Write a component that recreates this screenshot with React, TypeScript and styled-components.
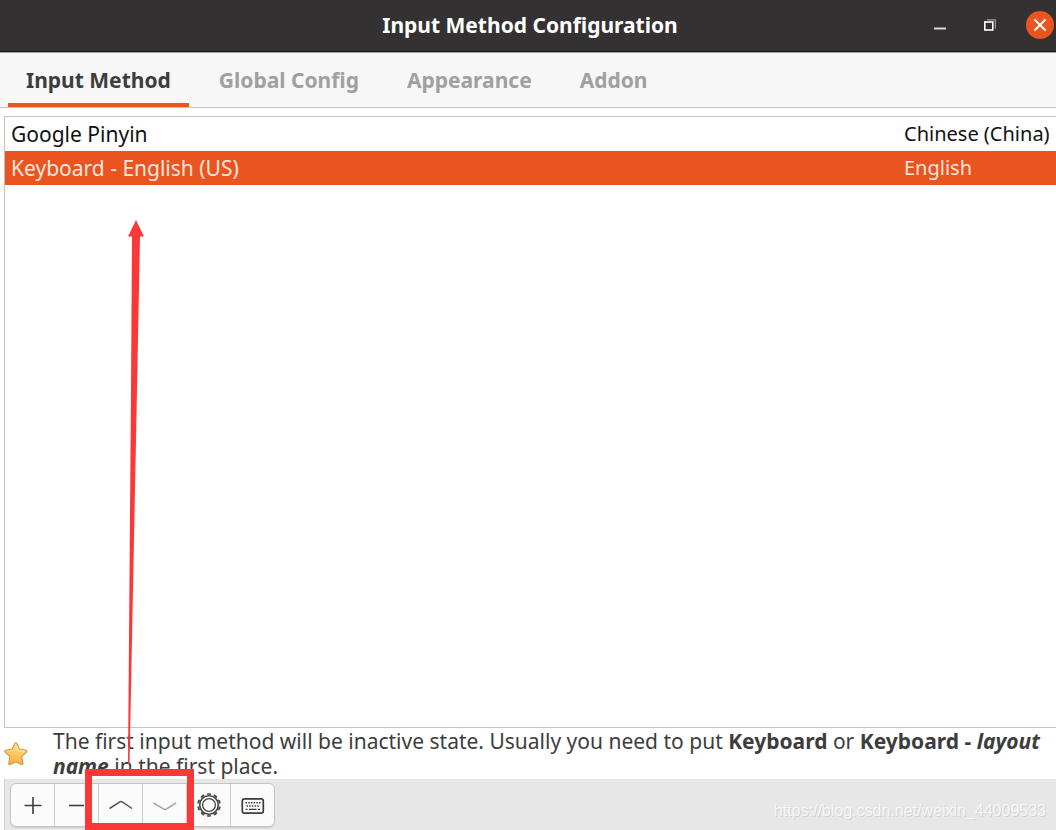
import React, { useState } from "react";
import styled, { createGlobalStyle } from "styled-components";

const GlobalStyle = createGlobalStyle`
  *, *::before, *::after { box-sizing: border-box; }
  body {
    margin: 0;
    background: #ffffff;
    color: #3d3d3d;
    font-family: "Noto Sans", "Open Sans", sans-serif;
    font-size: 21px;
  }
  button { font: inherit; color: inherit; }
`;

const Window = styled.div`
  position: relative;
  display: flex;
  flex-direction: column;
  min-height: 100vh;
  overflow: hidden;
`;

const TitleBar = styled.header`
  display: grid;
  grid-template-columns: 1fr auto 1fr;
  align-items: center;
  height: 52px;
  background: #333132;
  border-bottom: 1px solid #1f1e1e;
`;

const Title = styled.h1`
  grid-column: 2;
  margin: 0;
  padding: 0 0 2px 4px;
  color: #ffffff;
  font-size: 21px;
  line-height: 28px;
`;

const WindowControls = styled.div`
  display: flex;
  justify-content: flex-end;
  align-items: center;
  gap: 22px;
  padding: 0 2px 2px 0;
`;

const WindowButton = styled.button<{ $close?: boolean }>`
  display: grid;
  place-items: center;
  width: 28px;
  height: 28px;
  padding: 0;
  border: 0;
  border-radius: 50%;
  background: ${(p) => (p.$close ? "#e95420" : "transparent")};
`;

const TabBar = styled.div`
  display: flex;
  gap: 12px;
  height: 56px;
  padding-left: 8px;
  background: #f7f7f7;
  border-top: 1px solid #a3a2a2;
  border-bottom: 1px solid #c4c4c4;
`;

const Tab = styled.button<{ $active: boolean }>`
  padding: 4px 18px 0;
  border: 0;
  border-bottom: 4px solid ${(p) => (p.$active ? "#e95420" : "transparent")};
  background: transparent;
  color: ${(p) => (p.$active ? "#3d3d3d" : "#a0a0a0")};
  font-size: 21px;
  font-weight: 700;
  line-height: 28px;
  white-space: nowrap;
`;

const ListFrame = styled.main`
  flex: 1;
  margin: 8px 0 0 4px;
  border: 1px solid #c4c4c4;
  border-right: 0;
`;

const MethodTable = styled.table`
  width: 100%;
  border-collapse: collapse;
`;

const MethodRow = styled.tr<{ $selected: boolean }>`
  height: 34px;
  background: ${(p) => (p.$selected ? "#e95420" : "#ffffff")};
  color: ${(p) => (p.$selected ? "#ffe6dc" : "#111111")};
`;

const MethodCell = styled.td<{ $language?: boolean }>`
  width: ${(p) => (p.$language ? "158px" : "auto")};
  padding: 0 6px;
  font-size: ${(p) => (p.$language ? "20px" : "21px")};
  line-height: 34px;
  white-space: nowrap;
`;

const Hint = styled.section`
  display: flex;
  align-items: center;
  gap: 25px;
  height: 51px;
  padding: 0 4px;
`;

const HintText = styled.p`
  flex: 1;
  margin: 0;
  font-size: 21px;
  line-height: 25px;
`;

const Toolbar = styled.footer`
  display: flex;
  align-items: flex-start;
  justify-content: space-between;
  height: 51px;
  margin-left: 4px;
  padding: 4px 10px 0 5px;
  background: #e7e7e7;
  border-left: 1px solid #d0d0d0;
`;

const ButtonGroup = styled.div`
  display: flex;
  border: 1px solid #c4c4c4;
  border-radius: 6px;
  background: #fbfbfb;
  box-shadow: 0 1px 1px #cfcfcf;
`;

const ToolButton = styled.button`
  display: grid;
  place-items: center;
  width: 43px;
  height: 42px;
  padding: 0;
  border: 0;
  background: transparent;
  & + & { width: 44px; border-left: 1px solid #cccccc; }
`;

const Watermark = styled.span`
  padding-top: 16px;
  color: #f6f6f6;
  font-family: "Liberation Sans", Arial, sans-serif;
  font-size: 16px;
  line-height: 24px;
  text-shadow: 1px 1px 0 #d2d2d2;
`;

const Annotation = styled.svg`
  position: absolute;
  left: 0;
  bottom: 0;
  pointer-events: none;
`;

const tabs = ["Input Method", "Global Config", "Appearance", "Addon"];

const methods = [
  { name: "Google Pinyin", language: "Chinese (China)" },
  { name: "Keyboard - English (US)", language: "English" },
];

const StarIcon = () => (
  <svg width="24" height="26" viewBox="0 0 24 26" aria-hidden="true">
    <defs>
      <linearGradient id="star" x1="0" y1="0" x2="0" y2="1">
        <stop offset="0" stopColor="#ffe39a" />
        <stop offset="0.55" stopColor="#fcc65a" />
        <stop offset="1" stopColor="#fbae42" />
      </linearGradient>
    </defs>
    <path
      d="M11.8 1.8Q12.6 1.8 13 2.8L15.4 8 22 9.2Q23.6 9.8 22.4 11L17.8 15.4 18.9 22.4Q18.8 24 17.2 23.4L11.8 20.8 6.4 23.5Q4.6 24 4.8 22.4L5.8 15.4 1.1 11Q0.2 9.6 1.7 9.2L8.2 8 10.6 2.8Q11 1.8 11.8 1.8Z"
      fill="url(#star)"
      stroke="#cf9748"
      strokeWidth="1.1"
      strokeLinejoin="round"
    />
    <path d="M11.8 4.5 14.4 9.4 20 10.4 16.4 14.6" fill="none" stroke="#fff0b8" strokeWidth="1" />
  </svg>
);

const teeth = Array.from({ length: 10 }, (_, i) => i * 36);

const icons: { label: string; drawing: React.ReactNode }[] = [
  { label: "Add", drawing: <path d="M14 6V23M5.5 14.5H22.5" stroke="#3d3d3d" strokeWidth="1.6" /> },
  { label: "Remove", drawing: <path d="M6 14.5H21" stroke="#3d3d3d" strokeWidth="1.6" /> },
  { label: "Move up", drawing: <path d="M2.5 17.5 12.8 10.8Q14 10 15.2 10.8L25 17.5" stroke="#555555" strokeWidth="1.5" /> },
  { label: "Move down", drawing: <path d="M2.5 12 12.8 18.2Q14 19 15.2 18.2L25 12" stroke="#a6a6a6" strokeWidth="1.5" /> },
  {
    label: "Configure",
    drawing: (
      <g stroke="#444444">
        <circle cx="14" cy="14" r="9.3" strokeWidth="1.6" />
        <circle cx="14" cy="14" r="6.4" strokeWidth="1.3" />
        {teeth.map((a) => (
          <path key={a} d="M12.4 3.8 13 3H15L15.6 3.8" strokeWidth="1.7" transform={`rotate(${a} 14 14)`} />
        ))}
      </g>
    ),
  },
  {
    label: "Keyboard layout",
    drawing: (
      <g stroke="#3d3d3d">
        <rect x="3.3" y="7.8" width="21" height="14.4" rx="2.2" strokeWidth="1.7" />
        <path d="M6.5 11.8H21.5" strokeWidth="1.4" strokeDasharray="1.5 1.2" />
        <path d="M7.5 15H20.5" strokeWidth="1.4" strokeDasharray="1.5 1.2" />
        <path d="M6.5 18.4H8.5M10 18.4H17.5M19 18.4H21" strokeWidth="1.4" />
      </g>
    ),
  },
];

export default function App() {
  const [activeTab, setActiveTab] = useState(0);
  const [selected, setSelected] = useState(1);

  return (
    <>
      <GlobalStyle />
      <Window>
        <TitleBar>
          <Title>Input Method Configuration</Title>
          <WindowControls>
            <WindowButton aria-label="Minimize">
              <svg width="28" height="28" fill="none">
                <path d="M8 17.5H20" stroke="#d8d8d8" strokeWidth="2" />
              </svg>
            </WindowButton>
            <WindowButton aria-label="Restore">
              <svg width="28" height="28" fill="none">
                <path d="M11 8.8H19.4V17.5" stroke="#969595" strokeWidth="1.3" />
                <rect x="8.8" y="11" width="8" height="8" stroke="#ffffff" strokeWidth="1.6" />
              </svg>
            </WindowButton>
            <WindowButton $close aria-label="Close">
              <svg width="28" height="28" fill="none">
                <path d="M8.5 8.5 19.5 19.5M19.5 8.5 8.5 19.5" stroke="#ffffff" strokeWidth="2" />
              </svg>
            </WindowButton>
          </WindowControls>
        </TitleBar>

        <TabBar role="tablist">
          {tabs.map((name, i) => (
            <Tab
              key={name}
              role="tab"
              aria-selected={i === activeTab}
              $active={i === activeTab}
              onClick={() => setActiveTab(i)}
            >
              {name}
            </Tab>
          ))}
        </TabBar>

        <ListFrame>
          <MethodTable aria-label="Input methods">
            <tbody>
              {methods.map((m, i) => (
                <MethodRow key={m.name} $selected={i === selected} onClick={() => setSelected(i)}>
                  <MethodCell>{m.name}</MethodCell>
                  <MethodCell $language>{m.language}</MethodCell>
                </MethodRow>
              ))}
            </tbody>
          </MethodTable>
        </ListFrame>

        <Hint>
          <StarIcon />
          <HintText>
            The first input method will be inactive state. Usually you need to put <b>Keyboard</b> or{" "}
            <b>
              Keyboard - <i>layout name</i>
            </b>{" "}
            in the first place.
          </HintText>
        </Hint>

        <Toolbar>
          <ButtonGroup>
            {icons.map(({ label, drawing }) => (
              <ToolButton key={label} aria-label={label}>
                <svg width="28" height="28" viewBox="0 0 28 28" fill="none">
                  {drawing}
                </svg>
              </ToolButton>
            ))}
          </ButtonGroup>
          <Watermark>https://blog.csdn.net/weixin_44009533</Watermark>
        </Toolbar>

        <Annotation width="200" height="620" viewBox="0 0 200 620" aria-hidden="true">
          <path d="M136 10 144 26.5H140L137 180 129.5 554H128L131 180 132 26.5H128Z" fill="#fb3838" />
          <rect x="88.5" y="562.5" width="102" height="54" fill="none" stroke="#fb3838" strokeWidth="7" />
        </Annotation>
      </Window>
    </>
  );
}
